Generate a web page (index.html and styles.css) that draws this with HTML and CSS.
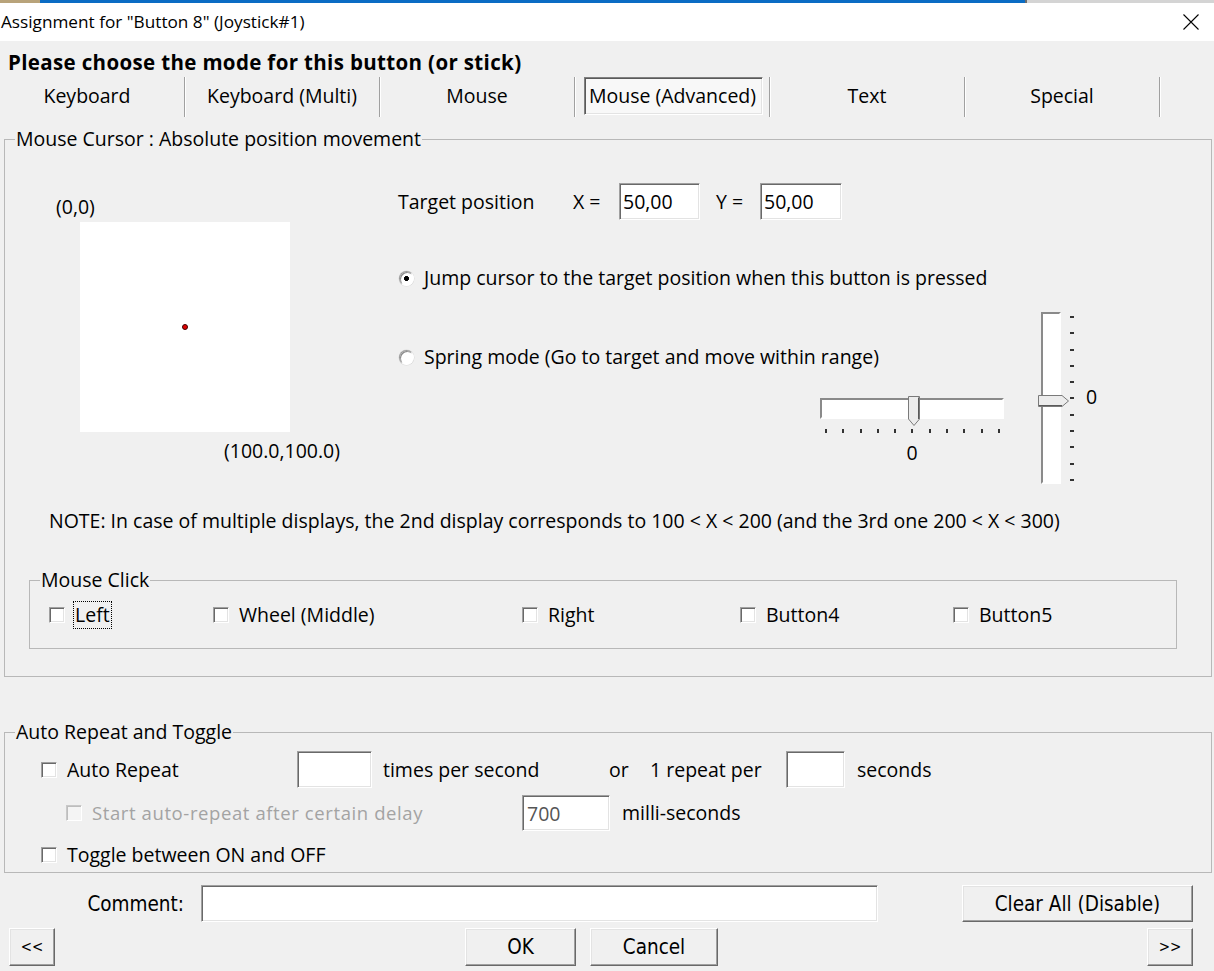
FILE: index.html
```html
<!DOCTYPE html>
<html lang="en">
  <head>
    <meta charset="UTF-8" />
    <title>Assignment for "Button 8" (Joystick#1)</title>
    <link rel="stylesheet" href="styles.css">
  </head>
  <body>
    <div class="strip"></div>
    <div class="titlebar">
      <span class="title">Assignment for "Button 8" (Joystick#1)</span>
      <svg class="close" width="16" height="16" viewBox="0 0 16 16">
        <path d="M0.5 0.5L15.5 15.5M15.5 0.5L0.5 15.5" stroke="#000" stroke-width="1.1" fill="none" />
      </svg>
    </div>

    <div class="heading">Please choose the mode for this button (or stick)</div>
    <div class="tabs">
      <div class="tab">Keyboard</div>
      <div class="tab">Keyboard (Multi)</div>
      <div class="tab">Mouse</div>
      <div class="tab tab-active"><span class="tab-box">Mouse (Advanced)</span></div>
      <div class="tab">Text</div>
      <div class="tab">Special</div>
    </div>

    <fieldset class="group group-cursor">
      <legend>Mouse Cursor : Absolute position movement</legend>
      <div class="cursor-area">
        <div class="screen-col">
          <div class="coord-top">(0,0)</div>
          <div class="screen"><span class="dot"></span></div>
          <div class="coord-bottom">(100.0,100.0)</div>
        </div>

        <div class="target-col">
          <div class="target-row">
            <span class="target-label">Target position</span>
            <span class="axis-label">X =</span>
            <input class="field field-x" type="text" value="50,00" />
            <span class="axis-label axis-y">Y =</span>
            <input class="field field-y" type="text" value="50,00" />
          </div>
          <label class="radio-row radio-jump"><span class="radio radio-on"></span>Jump cursor to the target position when this button is pressed</label>
          <label class="radio-row radio-spring"><span class="radio"></span>Spring mode (Go to target and move within range)</label>
          <div class="hslider">
            <div class="track track-h">
              <svg class="thumb-h" width="12" height="30" viewBox="0 0 12 30">
                <path d="M0.5 0.5H11.5V23L6 29.5L0.5 23Z" fill="#ececec" stroke="#7a7a7a" />
                <path d="M10.5 1.5V23" stroke="#5a5a5a" />
              </svg>
            </div>
            <div class="ticks-h">
              <span></span><span></span><span></span><span></span><span></span><span></span>
              <span></span><span></span><span></span><span></span><span></span>
            </div>
            <div class="slider-value">0</div>
          </div>
        </div>

        <div class="vslider">
          <div class="track track-v">
            <svg class="thumb-v" width="31" height="12" viewBox="0 0 31 12">
              <path d="M0.5 0.5H24L30.5 6L24 11.5H0.5Z" fill="#ececec" stroke="#7a7a7a" />
              <path d="M1 10.5H24" stroke="#5a5a5a" />
            </svg>
          </div>
          <div class="ticks-v">
            <span></span><span></span><span></span><span></span><span></span><span></span>
            <span></span><span></span><span></span><span></span><span></span>
          </div>
          <div class="vslider-value">0</div>
        </div>
      </div>

      <p class="note">NOTE: In case of multiple displays, the 2nd display corresponds to 100 &lt; X &lt; 200 (and the 3rd one 200 &lt; X &lt; 300)</p>

      <fieldset class="group group-click">
        <legend>Mouse Click</legend>
        <div class="click-row">
          <label class="check click-left"><span class="box"></span><span class="focus">Left</span></label>
          <label class="check click-wheel"><span class="box"></span>Wheel (Middle)</label>
          <label class="check click-right"><span class="box"></span>Right</label>
          <label class="check click-b4"><span class="box"></span>Button4</label>
          <label class="check"><span class="box"></span>Button5</label>
        </div>
      </fieldset>
    </fieldset>

    <fieldset class="group group-repeat">
      <legend>Auto Repeat and Toggle</legend>
      <div class="repeat-row repeat-main">
        <label class="check repeat-check"><span class="box"></span>Auto Repeat</label>
        <input class="field field-times" type="text" />
        <span class="times-label">times per second</span>
        <span class="or-label">or</span>
        <span class="per-label">1 repeat per</span>
        <input class="field field-secs" type="text" />
        <span class="unit-label">seconds</span>
      </div>
      <div class="repeat-row repeat-delay">
        <label class="check check-disabled delay-check"><span class="box"></span>Start auto-repeat after certain delay</label>
        <input class="field field-delay" type="text" value="700" />
        <span class="unit-label">milli-seconds</span>
      </div>
      <div class="repeat-row repeat-toggle">
        <label class="check"><span class="box"></span>Toggle between ON and OFF</label>
      </div>
    </fieldset>

    <div class="comment-row">
      <label class="comment-label" for="comment">Comment:</label>
      <input class="field field-comment" id="comment" type="text" />
      <button class="btn btn-clear">Clear All (Disable)</button>
    </div>
    <div class="button-row">
      <button class="btn btn-nav">&lt;&lt;</button>
      <button class="btn btn-ok">OK</button>
      <button class="btn btn-cancel">Cancel</button>
      <button class="btn btn-nav btn-next">&gt;&gt;</button>
    </div>
  </body>
</html>
```

FILE: styles.css
```css
* {
  box-sizing: border-box;
}
body {
  margin: 0;
  width: 1214px;
  height: 971px;
  overflow: hidden;
  background: #f0f0f0;
  font-family: "Open Sans", "Noto Sans", sans-serif;
  font-size: 19.5px;
  line-height: 24px;
  color: #000;
}

/* window chrome */
.strip {
  height: 3px;
  background: linear-gradient(to right, #b8a37a 0 40px, #0a6cc4 40px 1025px, #6d6d6d 1025px 1027px, #d4d4d4 1027px);
}
.titlebar {
  height: 38px;
  background: #fff;
  display: flex;
  align-items: center;
  justify-content: space-between;
  padding: 0 15px 0 1px;
}
.title {
  font-size: 17.2px;
}

.heading {
  margin-top: 9px;
  padding-left: 8px;
  font-weight: bold;
  font-size: 20.5px;
  letter-spacing: 0.35px;
}

/* mode tabs */
.tabs {
  display: flex;
  margin-top: 3px;
  margin-left: -10px;
  height: 40px;
}
.tab {
  width: 195px;
  height: 40px;
  display: flex;
  align-items: center;
  justify-content: center;
  border-right: 1px solid #a0a0a0;
  box-shadow: 1px 0 0 #fff;
  padding-bottom: 2px;
}
.tab-active {
  justify-content: flex-end;
  padding: 0 6px 2px 0;
}
.tab-box {
  width: 179px;
  height: 38px;
  display: flex;
  align-items: center;
  padding-left: 4px;
  white-space: nowrap;
  background: #f8f8f8;
  border: 1px solid;
  border-color: #808080 #fff #fff #808080;
  box-shadow: inset 1px 1px #5a5a5a, inset -1px -1px #e3e3e3;
}

/* group boxes */
fieldset.group {
  margin: 0;
  padding: 0;
  min-width: 0;
  border: 1px solid #b8b8b8;
}
fieldset.group legend {
  margin-left: 10px;
  padding: 0 1px;
  line-height: 22px;
}
.group-cursor {
  margin: 11px 2px 0 4px !important;
}
.group-click {
  margin: 36px 0 27px 24px !important;
  width: 1148px;
  padding-bottom: 21px !important;
}
.group-repeat {
  margin: 44px 2px 0 4px !important;
  padding-bottom: 5px !important;
}

/* cursor position area */
.cursor-area {
  display: flex;
}
.screen-col {
  width: 393px;
}
.coord-top {
  margin: 45px 0 0 51px;
}
.screen {
  position: relative;
  margin: 3px 0 0 75px;
  width: 210px;
  height: 210px;
  background: #fff;
}
.dot {
  position: absolute;
  left: 102px;
  top: 102px;
  width: 6px;
  height: 6px;
  border-radius: 50%;
  background: #e00000;
  border: 1px solid #400000;
}
.coord-bottom {
  margin: 7px 0 0 219px;
}

.target-col {
  width: 640px;
}
.target-row {
  display: flex;
  align-items: center;
  margin-top: 33px;
  height: 37px;
}
.target-label {
  width: 175px;
}
.axis-label {
  width: 46px;
}
.axis-y {
  width: 44px;
  margin-left: 16px;
}
.field {
  height: 37px;
  background: #fff;
  border: 1px solid;
  border-color: #a0a0a0 #fff #fff #a0a0a0;
  box-shadow: inset 1px 1px #696969, inset -1px -1px #e3e3e3;
  font: inherit;
  padding: 0 0 0 3px;
  outline: none;
}
.field-x {
  width: 81px;
}
.field-y {
  width: 82px;
}

.radio-row {
  display: flex;
  align-items: center;
  margin-left: 1px;
  white-space: nowrap;
}
.radio-jump {
  margin-top: 46px;
}
.radio-spring {
  margin-top: 55px;
}
.radio {
  flex: none;
  width: 15px;
  height: 15px;
  border-radius: 50%;
  margin-right: 10px;
  background: #fff;
  border: 1px solid;
  border-color: #9a9a9a #fff #fff #9a9a9a;
  box-shadow: inset 1px 1px #8a8a8a, 0 0 0 0.5px #d8d8d8;
}
.radio-on {
  background: radial-gradient(circle, #000 0 2.2px, #fff 2.8px);
}

/* sliders */
.track {
  position: relative;
  background: #fff;
  border: 2px solid;
  border-color: #8a8a8a #fff #fff #8a8a8a;
}
.hslider {
  width: 184px;
  margin: 29px 0 0 422px;
}
.track-h {
  height: 21px;
}
.thumb-h {
  position: absolute;
  left: 86px;
  top: -4px;
}
.ticks-h {
  display: flex;
  justify-content: space-between;
  width: 175px;
  margin: 10px 0 0 5px;
}
.ticks-h span {
  width: 2px;
  height: 4px;
  background: #333;
}
.slider-value {
  text-align: center;
  margin-top: 8px;
}

.vslider {
  display: flex;
  margin-top: 162px;
}
.track-v {
  width: 20px;
  height: 172px;
  margin-left: 3px;
}
.thumb-v {
  position: absolute;
  left: -5px;
  top: 81px;
}
.ticks-v {
  display: flex;
  flex-direction: column;
  justify-content: space-between;
  height: 165px;
  margin: 4px 0 0 9px;
}
.ticks-v span {
  width: 4px;
  height: 2px;
  background: #333;
}
.vslider-value {
  align-self: center;
  margin: 0 0 0 12px;
  padding-bottom: 2px;
}

.note {
  margin: 25px 0 0 44px;
  white-space: nowrap;
}

/* checkboxes */
.check {
  display: flex;
  align-items: center;
  white-space: nowrap;
}
.box {
  flex: none;
  width: 16px;
  height: 16px;
  margin-right: 10px;
  background: #fff;
  border: 1px solid;
  border-color: #a0a0a0 #fff #fff #a0a0a0;
  box-shadow: inset 1px 1px #696969, inset -1px -1px #e3e3e3;
}
.click-row {
  display: flex;
  padding: 12px 0 0 19px;
}
.click-left {
  width: 164px;
}
.click-wheel {
  width: 309px;
}
.click-right {
  width: 218px;
}
.click-b4 {
  width: 213px;
}
.focus {
  outline: 1px dotted #000;
  outline-offset: 1px;
}

/* auto repeat */
.repeat-row {
  display: flex;
  align-items: center;
  white-space: nowrap;
}
.repeat-main {
  margin-top: 8px;
  padding-left: 36px;
}
.repeat-check {
  width: 256px;
}
.field-times {
  width: 75px;
}
.times-label {
  width: 226px;
  margin-left: 11px;
}
.or-label {
  width: 41px;
}
.per-label {
  width: 136px;
}
.field-secs {
  width: 59px;
}
.unit-label {
  margin-left: 12px;
}
.repeat-delay {
  margin-top: 7px;
  padding-left: 61px;
}
.delay-check {
  width: 456px;
  color: #a3a3a3;
  font-size: 18.5px;
  letter-spacing: 0.6px;
}
.check-disabled .box {
  background: #f4f4f4;
  border-color: #c8c8c8 #fff #fff #c8c8c8;
  box-shadow: inset 1px 1px #bdbdbd;
}
.field-delay {
  width: 88px;
  height: 36px;
  padding-left: 4px;
  color: #555;
}
.repeat-toggle {
  margin-top: 12px;
  padding-left: 36px;
}

/* bottom buttons */
.comment-row {
  display: flex;
  align-items: center;
  margin-top: 12px;
}
.comment-label,
.btn {
  font-family: "Liberation Sans Narrow", "DejaVu Sans", sans-serif;
  font-stretch: condensed;
  font-size: 20.5px;
}
.comment-label {
  width: 201px;
  text-align: right;
  padding-right: 17px;
}
.field-comment {
  width: 677px;
}
.btn {
  height: 38px;
  background: #f0f0f0;
  color: #000;
  border: 1px solid;
  border-color: #fff #696969 #696969 #fff;
  box-shadow: inset -1px -1px #a0a0a0, inset 1px 1px #e3e3e3;
  padding: 0;
}
.btn-clear {
  width: 231px;
  height: 37px;
  margin-left: 84px;
}
.button-row {
  display: flex;
  margin-top: 6px;
}
.btn-nav {
  width: 46px;
  margin-left: 9px;
  font-size: 15px;
}
.btn-ok {
  width: 111px;
  margin-left: 410px;
}
.btn-cancel {
  width: 128px;
  margin-left: 14px;
}
.btn-next {
  margin-left: auto;
  margin-right: 21px;
}
```
